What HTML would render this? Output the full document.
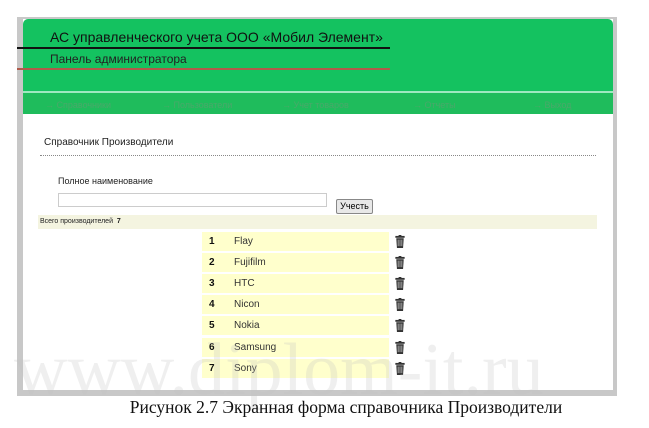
<!DOCTYPE html>
<html><head><meta charset="utf-8"><style>
body{margin:0;width:649px;height:428px;background:#fff;position:relative;overflow:hidden;font-family:"Liberation Sans","DejaVu Sans",sans-serif}
.a{position:absolute}
.row{position:absolute;left:202px;width:187px;height:19px;background:#ffffcc;font-size:10px;color:#333}
.row b{position:absolute;left:7px;top:4px;color:#111}
.row span{position:absolute;left:32px;top:4px}
.tr{position:absolute;left:395px;width:10px;height:13px}
.nav{position:absolute;top:100px;font-size:9px;color:#4aa86a}
</style></head><body>
<div class="a" style="left:17px;top:17px;width:600px;height:379px;background:#c8c8c8"></div>
<div class="a" style="left:23px;top:19px;width:590px;height:371px;background:#fff"></div>
<div class="a" style="left:23px;top:19px;width:590px;height:72px;background:#14c260;border-radius:5px 5px 0 0"></div>
<div class="a" style="left:23px;top:91px;width:590px;height:2px;background:#9fe8c0"></div>
<div class="a" style="left:23px;top:93px;width:590px;height:21px;background:#1fbc5c"></div>
<div class="a" style="left:50px;top:29px;font-size:14px;color:#111">АС управленческого учета ООО «Мобил Элемент»</div>
<div class="a" style="left:17px;top:47px;width:373px;height:1.5px;background:#111"></div>
<div class="a" style="left:50px;top:52px;font-size:12px;color:#222">Панель администратора</div>
<div class="a" style="left:17px;top:68px;width:373px;height:1.5px;background:#b05a4a"></div>
<div class="nav" style="left:45px">→ Справочники</div>
<div class="nav" style="left:162px">→ Пользователи</div>
<div class="nav" style="left:282px">→ Учет товаров</div>
<div class="nav" style="left:413px">→ Отчеты</div>
<div class="nav" style="left:533px">→ Выход</div>
<div class="a" style="left:44px;top:137px;font-size:10px;color:#222">Справочник Производители</div>
<div class="a" style="left:40px;top:155px;width:556px;border-top:1px dotted #888"></div>
<div class="a" style="left:58px;top:176px;font-size:9px;color:#222">Полное наименование</div>
<div class="a" style="left:58px;top:193px;width:267px;height:12px;border:1px solid #ccc;background:#fff"></div>
<div class="a" style="left:336px;top:199px;width:35px;height:13px;border:1px solid #888;background:#e8e8e8;font-size:9px;text-align:center;line-height:13px;border-radius:2px">Учесть</div>
<div class="a" style="left:38px;top:215px;width:559px;height:14px;background:#f4f4e0;font-size:7px;line-height:14px;color:#222">&nbsp;Всего производителей&nbsp; <b>7</b></div>
<div class="row" style="top:232px"><b>1</b><span>Flay</span></div>
<div class="row" style="top:253px"><b>2</b><span>Fujifilm</span></div>
<div class="row" style="top:274px"><b>3</b><span>HTC</span></div>
<div class="row" style="top:295px"><b>4</b><span>Nicon</span></div>
<div class="row" style="top:316px"><b>5</b><span>Nokia</span></div>
<div class="row" style="top:338px"><b>6</b><span>Samsung</span></div>
<div class="row" style="top:359px"><b>7</b><span>Sony</span></div>
<svg width="0" height="0" style="position:absolute"><defs><g id="t"><rect x="0" y="0" width="10" height="2" fill="#333"/><rect x="3.5" y="-1" width="3" height="1.5" fill="#333"/><path d="M1 2.5h8l-0.7 10.5h-6.6z" fill="#333"/><path d="M3 4v7M5 4v7M7 4v7" stroke="#ccc" stroke-width="0.8"/></g></defs></svg>
<svg class="tr" style="top:235px" viewBox="0 -1 10 14"><use href="#t"/></svg>
<svg class="tr" style="top:256px" viewBox="0 -1 10 14"><use href="#t"/></svg>
<svg class="tr" style="top:277px" viewBox="0 -1 10 14"><use href="#t"/></svg>
<svg class="tr" style="top:298px" viewBox="0 -1 10 14"><use href="#t"/></svg>
<svg class="tr" style="top:319px" viewBox="0 -1 10 14"><use href="#t"/></svg>
<svg class="tr" style="top:341px" viewBox="0 -1 10 14"><use href="#t"/></svg>
<svg class="tr" style="top:362px" viewBox="0 -1 10 14"><use href="#t"/></svg>
<div class="a" style="left:14px;top:328px;font-family:'Liberation Serif',serif;font-size:74px;color:rgba(190,190,190,0.25);letter-spacing:0px">www.diplom-it.ru</div>
<div class="a" style="left:0;width:692px;text-align:center;top:397px;font-family:'Liberation Serif',serif;font-size:17.5px;color:#111">Рисунок 2.7 Экранная форма справочника Производители</div>
</body></html>
